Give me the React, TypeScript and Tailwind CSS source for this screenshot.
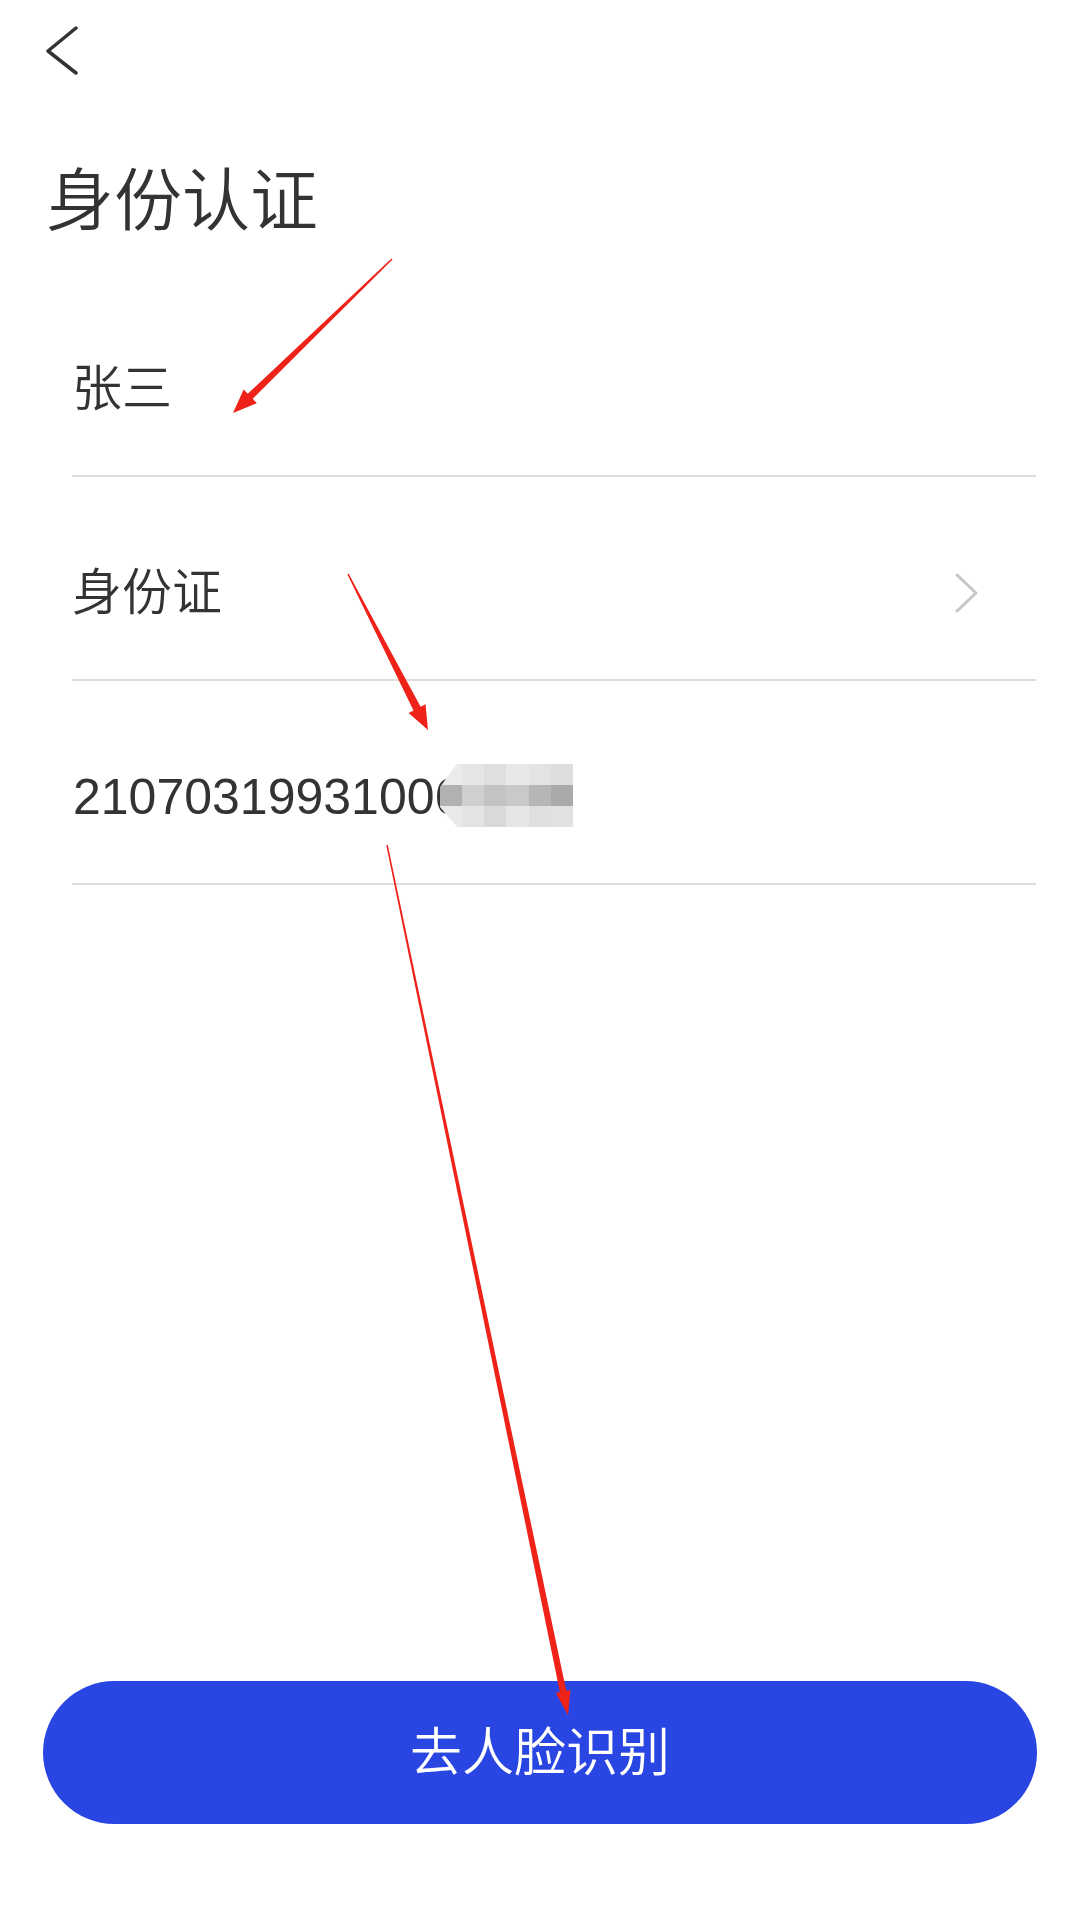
import { useMemo } from "react"

type Pt = [number, number]

interface Arrow {
  from: Pt
  to: Pt
  tail: number
  neck: number
  headLen: number
  headWidth: number
}

const arrows: Arrow[] = [
  { from: [392, 259], to: [233, 413], tail: 1.5, neck: 7, headLen: 24, headWidth: 19 },
  { from: [348, 574], to: [428, 730], tail: 1.5, neck: 8, headLen: 24, headWidth: 19 },
  { from: [387, 845], to: [568, 1715], tail: 1.5, neck: 6.5, headLen: 24, headWidth: 15 },
]

// pixelated cover over the tail of the id number
const mosaic = [
  ["bg-[#ebebeb]", "bg-[#e6e6e6]", "bg-[#dfdfdf]", "bg-[#e8e8e8]", "bg-[#e3e3e3]", "bg-[#dddddd]"],
  ["bg-[#b1b1b1]", "bg-[#cfcfcf]", "bg-[#c3c3c3]", "bg-[#c9c9c9]", "bg-[#b6b6b6]", "bg-[#aaaaaa]"],
  ["bg-[#e9e9e9]", "bg-[#e4e4e4]", "bg-[#d9d9d9]", "bg-[#e6e6e6]", "bg-[#dfdfdf]", "bg-[#e2e2e2]"],
]

const arrowPoints = (a: Arrow) => {
  const [sx, sy] = a.from
  const [tx, ty] = a.to
  const len = Math.hypot(tx - sx, ty - sy)
  const dx = (tx - sx) / len
  const dy = (ty - sy) / len
  const nx = -dy
  const ny = dx
  const bx = tx - dx * a.headLen
  const by = ty - dy * a.headLen
  const p = (x: number, y: number, w: number) => `${x + nx * w},${y + ny * w}`
  return [
    p(sx, sy, a.tail / 2),
    p(bx, by, a.neck / 2),
    p(bx, by, a.headWidth / 2),
    `${tx},${ty}`,
    p(bx, by, -a.headWidth / 2),
    p(bx, by, -a.neck / 2),
    p(sx, sy, -a.tail / 2),
  ].join(" ")
}

const Row = ({ children, chevron }: { children: React.ReactNode; chevron?: boolean }) => (
  <div className="h-[204px] pt-[30px] flex items-center justify-between border-b-2 border-[#dedede]">
    {children}
    {chevron && (
      <svg width="26" height="42" viewBox="0 0 26 42" className="mr-[56px]" fill="none">
        <polyline points="3,3 22,21 3,39" stroke="#c6c6c6" strokeWidth="3" strokeLinecap="round" strokeLinejoin="round" />
      </svg>
    )}
  </div>
)

const App = () => {
  const arrowPolys = useMemo(() => arrows.map(arrowPoints), [])

  return (
    <div className="relative w-[1080px] h-[1918px] bg-white flex flex-col text-[#333333] font-['Liberation_Sans','Noto_Sans_CJK_SC',sans-serif]">
      <div className="pl-[46px] pt-[25px]">
        <svg width="32" height="50" viewBox="0 0 32 50" fill="none">
          <polyline points="30,3 2,26 30,48" stroke="#333333" strokeWidth="3.5" strokeLinecap="round" strokeLinejoin="round" />
        </svg>
      </div>

      <h1 className="mt-[92px] pl-[46px] text-[68px] leading-none font-[350]">身份认证</h1>

      <div className="mt-[38px] ml-[72px] mr-[44px] font-[350]">
        <Row>
          <span className="text-[50px] leading-[50px]">张三</span>
        </Row>
        <Row chevron>
          <span className="text-[50px] leading-[50px]">身份证</span>
        </Row>
        <Row>
          <span className="relative text-[50px] leading-[50px] pl-[1px] font-normal">
            210703199310068
            <span className="absolute left-[368px] top-[-8px] w-[133px] h-[63px] grid grid-cols-6 grid-rows-3 [clip-path:polygon(17px_0,100%_0,100%_100%,17px_100%,0_43px,0_23px)]">
              {mosaic.flat().map((c, i) => (
                <span key={i} className={c}></span>
              ))}
            </span>
          </span>
        </Row>
      </div>

      <div className="mt-auto mb-[94px] mx-[43px]">
        <button className="w-full h-[143px] rounded-full bg-[#2946e3] text-white text-[52px] leading-none font-[350] flex items-center justify-center">
          去人脸识别
        </button>
      </div>

      <svg className="absolute inset-0 pointer-events-none" width="1080" height="1918" viewBox="0 0 1080 1918">
        {arrowPolys.map((pts, i) => (
          <polygon key={i} points={pts} fill="#ef2219" />
        ))}
      </svg>
    </div>
  )
}

export default App
